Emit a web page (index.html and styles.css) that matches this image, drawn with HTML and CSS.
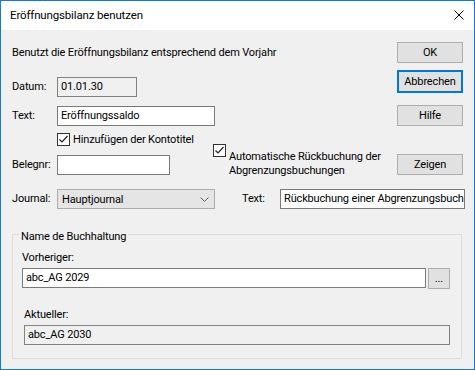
FILE: index.html
```html
<!DOCTYPE html>
<html lang="de">
<head>
    <meta charset="UTF-8">
    <meta name="viewport" content="width=device-width, initial-scale=1.0">
    <title>Eröffnungsbilanz benutzen</title>
    <link rel="stylesheet" href="styles.css">
</head>
<body>
    <div class="window">
        <div class="titlebar">
            <span class="title">Eröffnungsbilanz benutzen</span>
            <svg class="close" width="10" height="10" viewBox="0 0 10 10">
                <path d="M0.5 0.5 L9.5 9.5 M9.5 0.5 L0.5 9.5" stroke="#000" stroke-width="1" fill="none"/>
            </svg>
        </div>

        <div class="content">
            <!-- intro + OK -->
            <div class="row row-a">
                <p class="intro">Benutzt die Eröffnungsbilanz entsprechend dem Vorjahr</p>
                <button class="btn">OK</button>
            </div>

            <!-- Datum -->
            <div class="row row-b">
                <div class="pair pair-datum">
                    <span class="label">Datum:</span>
                    <div class="field readonly datum">01.01.30</div>
                </div>
                <button class="btn default">Abbrechen</button>
            </div>

            <!-- Text -->
            <div class="row row-c">
                <div class="pair pair-text">
                    <span class="label">Text:</span>
                    <div class="field text">Eröffnungssaldo</div>
                </div>
                <button class="btn">Hilfe</button>
            </div>

            <!-- Kontotitel / Belegnr / Rückbuchung -->
            <div class="row row-d">
                <div class="col-left">
                    <div class="check check-titel">
                        <svg width="13" height="13" viewBox="0 0 13 13"><rect x="0.5" y="0.5" width="12" height="12" fill="#fff" stroke="#333"/><path d="M2.5 6.5 L5 9 L10.5 3" fill="none" stroke="#222" stroke-width="1.2"/></svg>
                        <span>Hinzufügen der Kontotitel</span>
                    </div>
                    <div class="pair pair-beleg">
                        <span class="label">Belegnr:</span>
                        <div class="field beleg"></div>
                    </div>
                </div>
                <div class="check check-auto">
                    <svg width="13" height="13" viewBox="0 0 13 13"><rect x="0.5" y="0.5" width="12" height="12" fill="#fff" stroke="#333"/><path d="M2.5 6.5 L5 9 L10.5 3" fill="none" stroke="#222" stroke-width="1.2"/></svg>
                    <span class="auto-text">Automatische Rückbuchung der<br>Abgrenzungsbuchungen</span>
                </div>
                <button class="btn btn-zeigen">Zeigen</button>
            </div>

            <!-- Journal -->
            <div class="row row-e">
                <span class="label">Journal:</span>
                <div class="select">
                    <span>Hauptjournal</span>
                    <svg width="9" height="5" viewBox="0 0 9 5"><path d="M0.5 0.5 L4.5 4.5 L8.5 0.5" fill="none" stroke="#606060" stroke-width="1"/></svg>
                </div>
                <span class="label label-text2">Text:</span>
                <div class="field journal-text">Rückbuchung einer Abgrenzungsbuchung</div>
            </div>

            <!-- Name de Buchhaltung -->
            <div class="group">
                <span class="group-title">Name de Buchhaltung</span>
                <div class="group-label">Vorheriger:</div>
                <div class="browse-row">
                    <div class="field prev">abc_AG 2029</div>
                    <button class="btn btn-browse">...</button>
                </div>
                <div class="group-label shifted">Aktueller:</div>
                <div class="field readonly current">abc_AG 2030</div>
            </div>
        </div>
    </div>
</body>
</html>
```

FILE: styles.css
```css
* {
    box-sizing: border-box;
}
body {
    margin: 0;
    font-family: Roboto, "Liberation Sans", sans-serif;
    font-size: 11px;
    letter-spacing: -0.15px;
    color: #000;
    background: #fff;
}
.window {
    width: 475px;
    height: 370px;
    border: 1px solid #1a78c8;
    background: #f0f0f0;
    display: flex;
    flex-direction: column;
    overflow: hidden;
}
.titlebar {
    height: 29px;
    flex-shrink: 0;
    background: #fff;
    display: flex;
    align-items: center;
    justify-content: space-between;
    padding: 0 10px 1px 9px;
}
.title {
    font-size: 11.5px;
}
.content {
    flex: 1;
    padding: 12px 11px 0 11px;
}
.row {
    display: flex;
    align-items: flex-start;
}
.pair {
    display: flex;
    align-items: center;
}
.label {
    width: 45px;
    flex-shrink: 0;
    line-height: 20px;
}
.field {
    height: 20px;
    border: 1px solid #7a7a7a;
    background: #fff;
    padding: 0 3px;
    line-height: 18px;
    white-space: nowrap;
    overflow: hidden;
    flex-shrink: 0;
}
.field.readonly {
    background: #f0f0f0;
    border-color: #828282;
}
.btn {
    width: 66px;
    height: 21px;
    margin-left: auto;
    flex-shrink: 0;
    border: 1px solid #adadad;
    background: #e1e1e1;
    font: inherit;
    letter-spacing: inherit;
    color: #000;
    padding: 0;
}
.btn.default {
    height: 23px;
    border: 2px solid #0078d7;
}

.row-a {
    height: 21px;
    align-items: center;
}
.intro {
    margin: 0;
}
.row-b {
    margin-top: 7px;
    height: 23px;
}
.pair-datum {
    margin-top: 7px;
}
.datum {
    width: 80px;
}
.row-c {
    margin-top: 12px;
    height: 21px;
}
.pair-text {
    margin-top: 1px;
}
.text {
    width: 158px;
}

.row-d {
    margin-top: 7px;
    height: 42px;
}
.col-left {
    width: 201px;
    flex-shrink: 0;
}
.check {
    display: flex;
    align-items: center;
    flex-shrink: 0;
}
.check svg {
    flex-shrink: 0;
    display: block;
}
.check-titel {
    margin-left: 45px;
    height: 13px;
}
.check-titel span {
    margin-left: 3px;
    line-height: 13px;
}
.pair-beleg {
    margin-top: 9px;
}
.beleg {
    width: 113px;
}
.check-auto {
    margin-top: 11px;
    align-items: flex-start;
}
.auto-text {
    margin: 6px 0 0 3px;
    line-height: 14px;
    white-space: nowrap;
}
.btn-zeigen {
    margin-top: 21px;
}

.row-e {
    margin-top: 14px;
    align-items: center;
}
.select {
    width: 158px;
    height: 20px;
    flex-shrink: 0;
    border: 1px solid #acacac;
    background: #e5e5e5;
    display: flex;
    align-items: center;
    justify-content: space-between;
    padding: 0 5px 0 4px;
}
.select svg {
    display: block;
}
.label-text2 {
    width: 38px;
    margin-left: 27px;
}
.journal-text {
    width: 185px;
}

.group {
    margin-top: 25px;
    width: 450px;
    height: 125px;
    border: 1px solid #dcdcdc;
    padding: 0 0 0 9px;
}
.group-title {
    display: block;
    width: fit-content;
    margin: -6px 0 0 -3px;
    padding: 0 2px;
    background: #f0f0f0;
    line-height: 15px;
}
.group-label {
    margin-top: 6px;
    line-height: 15px;
}
.browse-row {
    display: flex;
    margin-top: 3px;
}
.prev {
    width: 404px;
}
.btn-browse {
    width: 22px;
    margin-left: 2px;
    line-height: 14px;
}
.group-label.shifted {
    margin: 18px 0 0 2px;
}
.current {
    width: 426px;
    margin: 3px 0 0 2px;
}
```
